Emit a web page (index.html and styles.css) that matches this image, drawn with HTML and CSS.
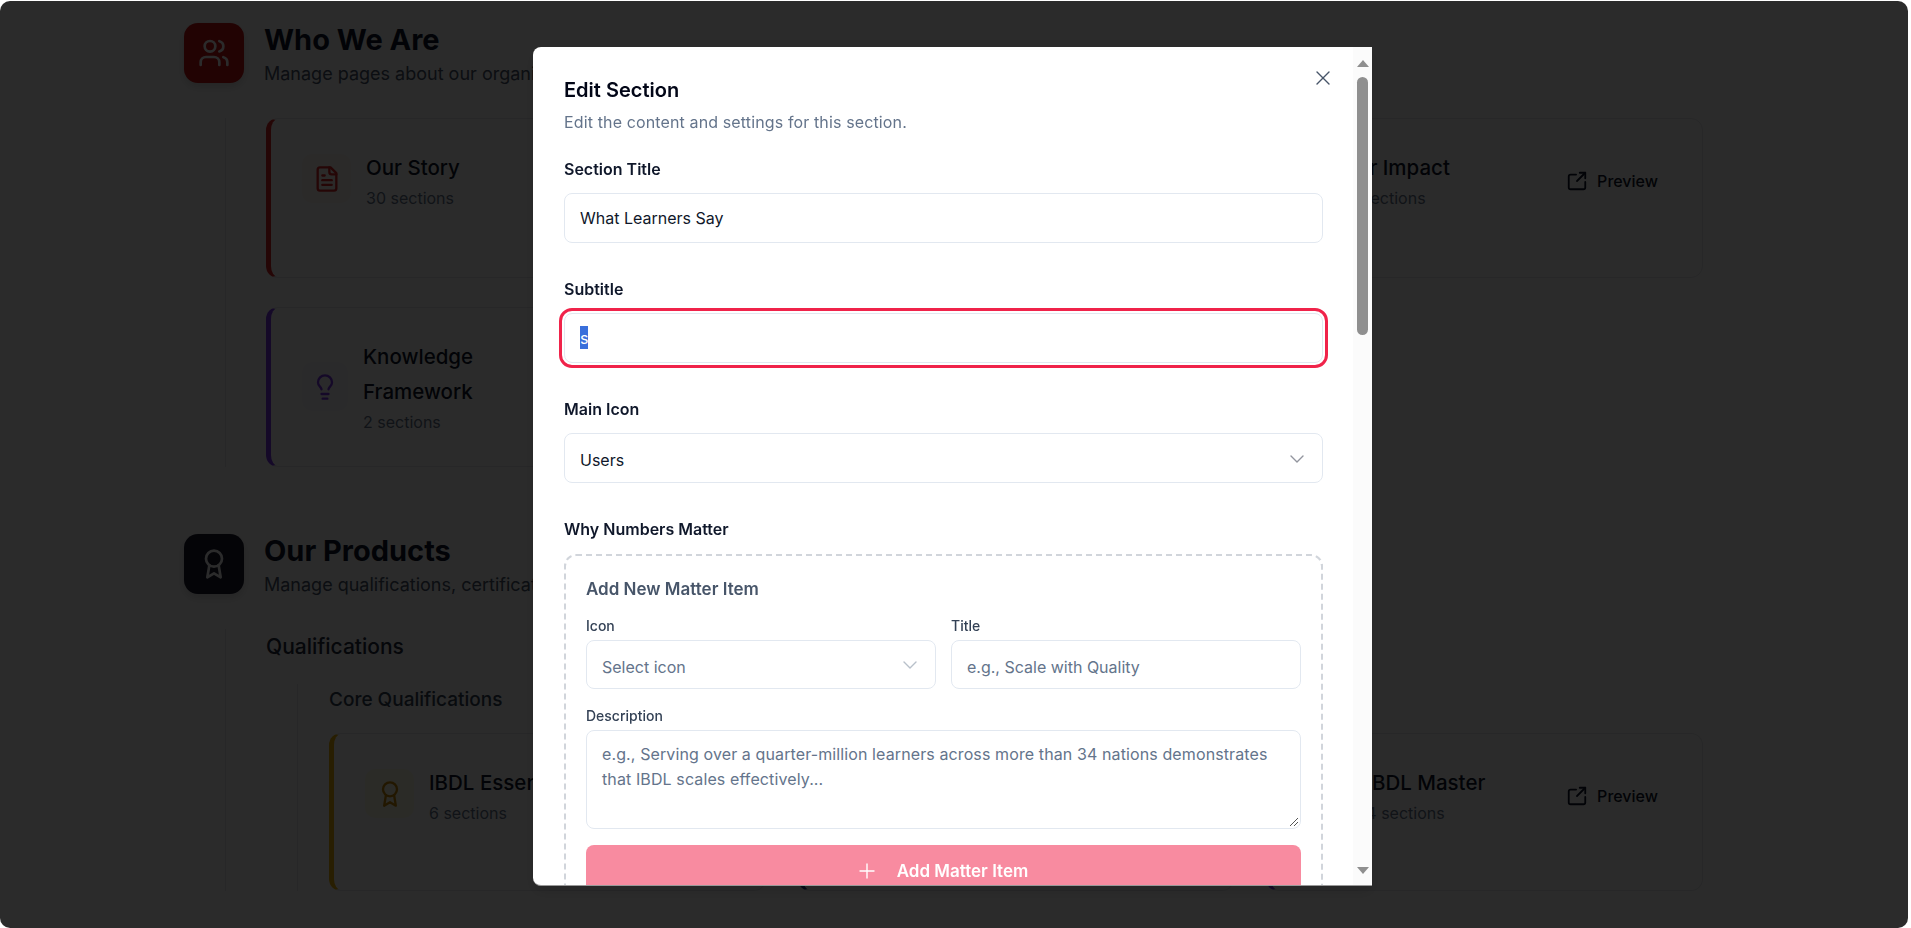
FILE: index.html
```
<!DOCTYPE html>
<html>
<head>
    <title>Edit Section</title>
    <link rel="stylesheet" href="styles.css">
</head>
<body>
    <main class="page">
        <section class="group">
            <header class="group-head">
                <div class="group-icon icon-red">
                    <svg viewBox="0 0 24 24" width="32" height="32" class="line-icon"><path d="M16 21v-2a4 4 0 0 0-4-4H6a4 4 0 0 0-4 4v2"/><circle cx="9" cy="7" r="4"/><path d="M22 21v-2a4 4 0 0 0-3-3.87"/><path d="M16 3.13a4 4 0 0 1 0 7.75"/></svg>
                </div>
                <div>
                    <h2>Who We Are</h2>
                    <p>Manage pages about our organization</p>
                </div>
            </header>
            <div class="group-body">
                <div class="card-grid">
                    <div class="card border-red">
                        <div class="card-icon tint-red">
                            <svg viewBox="0 0 24 24" width="28" height="28" class="line-icon stroke-red"><path d="M15 2H6a2 2 0 0 0-2 2v16a2 2 0 0 0 2 2h12a2 2 0 0 0 2-2V7Z"/><path d="M14 2v4a2 2 0 0 0 2 2h4"/><path d="M10 9H8"/><path d="M16 13H8"/><path d="M16 17H8"/></svg>
                        </div>
                        <div class="card-text">
                            <h3>Our Story</h3>
                            <span>30 sections</span>
                        </div>
                    </div>
                    <div class="card"></div>
                    <div class="card">
                        <div class="card-icon"></div>
                        <div class="card-text">
                            <h3>Our Impact</h3>
                            <span>12 sections</span>
                        </div>
                        <a class="preview" href="#">
                            <svg viewBox="0 0 24 24" width="22" height="22" class="line-icon"><path d="M21 13v6a2 2 0 0 1-2 2H5a2 2 0 0 1-2-2V7a2 2 0 0 1 2-2h6"/><path d="m21 3-9 9"/><path d="M15 3h6v6"/></svg>
                            Preview
                        </a>
                    </div>
                    <div class="card border-purple">
                        <div class="card-icon tint-purple">
                            <svg viewBox="0 0 24 24" width="28" height="28" class="line-icon stroke-purple"><path d="M15 14c.2-1 .7-1.7 1.5-2.5 1-.9 1.5-2.2 1.5-3.5A6 6 0 0 0 6 8c0 1 .2 2.2 1.5 3.5.7.7 1.3 1.5 1.5 2.5"/><path d="M9 18h6"/><path d="M10 22h4"/></svg>
                        </div>
                        <div class="card-text">
                            <h3>Knowledge<br>Framework</h3>
                            <span>2 sections</span>
                        </div>
                    </div>
                </div>
            </div>
        </section>

        <section class="group">
            <header class="group-head">
                <div class="group-icon icon-navy">
                    <svg viewBox="0 0 24 24" width="32" height="32" class="line-icon"><circle cx="12" cy="8" r="6"/><path d="M15.477 12.89 17 22l-5-3-5 3 1.523-9.11"/></svg>
                </div>
                <div>
                    <h2>Our Products</h2>
                    <p>Manage qualifications, certifications</p>
                </div>
            </header>
            <div class="group-body">
                <h3 class="sub-head">Qualifications</h3>
                <div class="sub-body">
                    <h4>Core Qualifications</h4>
                    <div class="card-grid">
                        <div class="card border-yellow">
                            <div class="card-icon tint-yellow">
                                <svg viewBox="0 0 24 24" width="28" height="28" class="line-icon stroke-yellow"><circle cx="12" cy="8" r="6"/><path d="M15.477 12.89 17 22l-5-3-5 3 1.523-9.11"/></svg>
                            </div>
                            <div class="card-text">
                                <h3>IBDL Essentials</h3>
                                <span>6 sections</span>
                            </div>
                        </div>
                        <div class="card border-navy"></div>
                        <div class="card border-purple">
                            <div class="card-icon"></div>
                            <div class="card-text">
                                <h3>IBDL Master</h3>
                                <span>4 sections</span>
                            </div>
                            <a class="preview" href="#">
                                <svg viewBox="0 0 24 24" width="22" height="22" class="line-icon"><path d="M21 13v6a2 2 0 0 1-2 2H5a2 2 0 0 1-2-2V7a2 2 0 0 1 2-2h6"/><path d="m21 3-9 9"/><path d="M15 3h6v6"/></svg>
                                Preview
                            </a>
                        </div>
                    </div>
                </div>
            </div>
        </section>
    </main>

    <div class="overlay"></div>

    <div class="modal">
        <div class="modal-body">
            <button class="close-btn">
                <svg viewBox="0 0 24 24" width="24" height="24" class="line-icon thin"><path d="M18 6 6 18"/><path d="m6 6 12 12"/></svg>
            </button>
            <h2 class="modal-title">Edit Section</h2>
            <p class="modal-desc">Edit the content and settings for this section.</p>

            <label class="field-label">Section Title</label>
            <div class="input">What Learners Say</div>

            <label class="field-label">Subtitle</label>
            <div class="input input-focus"><span class="selected">s</span></div>

            <label class="field-label">Main Icon</label>
            <div class="input select">
                Users
                <svg viewBox="0 0 24 24" width="24" height="24" class="line-icon thin chevron"><path d="m6 9 6 6 6-6"/></svg>
            </div>

            <label class="field-label">Why Numbers Matter</label>
            <div class="add-box">
                <h4>Add New Matter Item</h4>
                <div class="two-col">
                    <div>
                        <label class="small-label">Icon</label>
                        <div class="input input-small select placeholder">
                            Select icon
                            <svg viewBox="0 0 24 24" width="24" height="24" class="line-icon thin chevron"><path d="m6 9 6 6 6-6"/></svg>
                        </div>
                    </div>
                    <div>
                        <label class="small-label">Title</label>
                        <div class="input input-small placeholder">e.g., Scale with Quality</div>
                    </div>
                </div>
                <label class="small-label">Description</label>
                <div class="input textarea placeholder">
                    e.g., Serving over a quarter-million learners across more than 34 nations demonstrates that IBDL scales effectively...
                    <svg viewBox="0 0 10 10" width="10" height="10" class="grip"><path d="M1 9 9 1M5 9 9 5"/></svg>
                </div>
                <button class="add-btn">
                    <svg viewBox="0 0 24 24" width="24" height="24" class="line-icon thin"><path d="M5 12h14"/><path d="M12 5v14"/></svg>
                    Add Matter Item
                </button>
            </div>
        </div>
        <div class="scrollbar">
            <div class="arrow-up"></div>
            <div class="thumb-area"><div class="thumb"></div></div>
            <div class="arrow-down"></div>
        </div>
    </div>
</body>
</html>
```

FILE: styles.css
```
* {
    box-sizing: border-box;
}
html, body {
    height: 100%;
}
body {
    margin: 0;
    overflow: hidden;
    background-color: #fff;
    color: #0f172a;
    font-family: 'Inter', 'Liberation Sans', sans-serif;
    font-size: 16px;
    line-height: 28px;
}
h2, h3, h4, p {
    margin: 0;
}
.line-icon {
    fill: none;
    stroke: currentColor;
    stroke-width: 2;
    stroke-linecap: round;
    stroke-linejoin: round;
    display: block;
    flex: none;
}
.line-icon.thin {
    stroke-width: 1.4;
}

/* page behind the dialog */
.page {
    width: 1519px;
    margin-left: 184px;
    padding-top: 22px;
}
.group {
    margin-bottom: 66px;
}
.group-head {
    display: flex;
    gap: 20px;
    margin-bottom: 29px;
}
.group-icon {
    width: 60px;
    height: 60px;
    margin-top: 1px;
    border-radius: 14px;
    display: flex;
    align-items: center;
    justify-content: center;
    color: #fff;
    box-shadow: 0 4px 8px rgba(0, 0, 0, 0.15);
}
.icon-red {
    background-color: #c81414;
}
.icon-navy {
    background-color: #1a1a2e;
}
.group-head h2 {
    font-size: 29px;
    line-height: 36px;
    font-weight: 700;
}
.group-head p {
    margin-top: 1px;
    font-size: 18px;
    line-height: 30px;
    color: #475569;
}
.group-body {
    margin-left: 41px;
    padding-left: 40px;
    border-left: 1px solid #e5e7eb;
}
.card-grid {
    display: grid;
    grid-template-columns: repeat(3, 1fr);
    gap: 29px 32px;
}
.card {
    display: flex;
    align-items: flex-start;
    gap: 15px;
    min-height: 160px;
    padding: 31px 44px 28px 31px;
    background-color: #fff;
    border: 1px solid #e5e7eb;
    border-radius: 12px;
}
.border-red {
    border-left: 5px solid #dc2626;
}
.border-purple {
    border-left: 5px solid #7c3aed;
}
.border-yellow {
    border-left: 5px solid #eab308;
}
.border-navy {
    border-left: 5px solid #1e3a8a;
}
.card-icon {
    flex: none;
    width: 49px;
    height: 49px;
    margin-top: 4px;
    border-radius: 10px;
    display: flex;
    align-items: center;
    justify-content: center;
}
.tint-red {
    background-color: #fef6f2;
}
.tint-purple {
    width: 46px;
    margin-top: 23px;
    background-color: #faf8ff;
}
.tint-yellow {
    background-color: #fefce8;
}
.stroke-red {
    color: #dc2626;
}
.stroke-purple {
    color: #7c3aed;
}
.stroke-yellow {
    color: #ca8a04;
}
.card-text {
    flex: 1;
}
.card-text h3 {
    font-size: 20.5px;
    line-height: 35px;
    font-weight: 500;
}
.card-text span {
    display: block;
    margin-top: -1px;
    color: #64748b;
}
.preview {
    flex: none;
    display: flex;
    align-items: center;
    gap: 9px;
    margin-top: 17px;
    font-weight: 500;
    color: #0f172a;
    text-decoration: none;
}
.sub-head {
    font-size: 21px;
    line-height: 35px;
    font-weight: 500;
    color: #1e293b;
    margin-bottom: 20px;
}
.sub-body {
    margin-left: 31px;
    padding-left: 31px;
    border-left: 1px solid #e5e7eb;
}
.sub-body h4 {
    font-size: 19px;
    line-height: 32px;
    font-weight: 500;
    color: #334155;
    margin-bottom: 17px;
}
.sub-body .card {
    min-height: 158px;
}

/* dialog */
.overlay {
    position: fixed;
    top: 1px;
    left: 0;
    right: 3px;
    bottom: 0;
    border-radius: 10px;
    background-color: rgba(0, 0, 0, 0.83);
}
.modal {
    position: fixed;
    left: 533px;
    top: 47px;
    width: 839px;
    height: 839px;
    display: flex;
    background-color: #fff;
    border-bottom: 1px solid #999;
    border-radius: 8px 0 0 8px;
    box-shadow: 0 6px 14px rgba(0, 0, 0, 0.12);
    overflow: hidden;
}
.modal-body {
    position: relative;
    flex: 1;
    padding: 29px 30px 0 31px;
    overflow: hidden;
}
.close-btn {
    position: absolute;
    top: 19px;
    right: 18px;
    padding: 0;
    border: none;
    background: none;
    color: #475569;
}
.modal-title {
    font-size: 20px;
    line-height: 28px;
    font-weight: 600;
    color: #020617;
}
.modal-desc {
    margin: 4px 0 19px;
    color: #64748b;
    letter-spacing: 0.13px;
}
.field-label {
    display: block;
    font-weight: 600;
    margin-bottom: 10px;
}
.input {
    position: relative;
    height: 50px;
    margin-bottom: 32px;
    padding: 10px 15px;
    border: 1px solid #e2e8f0;
    border-radius: 8px;
    background-color: #fff;
}
.input-focus {
    outline: 3px solid #f0234a;
    outline-offset: 2px;
}
.selected {
    display: inline-block;
    height: 23px;
    margin-top: 2px;
    line-height: 25px;
    background-color: #3a6fdb;
    color: #fff;
}
.select {
    display: flex;
    align-items: center;
    justify-content: space-between;
    padding-top: 12px;
    padding-bottom: 8px;
}
.chevron {
    opacity: 0.45;
    margin: -3px -2px 0 0;
}
.add-box {
    height: 400px;
    margin-top: 11px;
    padding: 19px 20px;
    border: 2px dashed #d1d5db;
    border-radius: 12px;
}
.add-box h4 {
    font-size: 17px;
    line-height: 28px;
    font-weight: 600;
    color: #475569;
    margin-bottom: 11px;
}
.two-col {
    display: grid;
    grid-template-columns: 1fr 1fr;
    gap: 15px;
}
.small-label {
    display: block;
    font-size: 14px;
    line-height: 24px;
    font-weight: 500;
    color: #334155;
    margin-bottom: 2px;
}
.input-small {
    height: 49px;
    margin-bottom: 15px;
    padding-top: 12px;
}
.placeholder {
    color: #64748b;
}
.textarea {
    height: 99px;
    margin-bottom: 16px;
    padding: 11px 15px;
    line-height: 25px;
    letter-spacing: 0.11px;
}
.grip {
    position: absolute;
    right: 1px;
    bottom: 1px;
    fill: none;
    stroke: #555;
    stroke-width: 1;
}
.add-btn {
    display: flex;
    align-items: center;
    justify-content: center;
    gap: 18px;
    width: 100%;
    height: 50px;
    padding: 2px 4px 0 0;
    border: none;
    border-radius: 8px;
    background-color: #f88ba0;
    color: #fff;
    font-family: inherit;
    font-size: 17px;
    font-weight: 600;
}
.scrollbar {
    flex: none;
    width: 19px;
    display: flex;
    flex-direction: column;
    align-items: center;
    padding: 13px 0 11px;
    background-color: #fbfbfb;
}
.thumb-area {
    flex: 1;
    width: 11px;
    padding-top: 10px;
}
.thumb {
    height: 258px;
    border-radius: 6px;
    background-color: #8f8f8f;
}
.arrow-up {
    border-left: 6px solid transparent;
    border-right: 6px solid transparent;
    border-bottom: 7px solid #8f8f8f;
}
.arrow-down {
    border-left: 6px solid transparent;
    border-right: 6px solid transparent;
    border-top: 7px solid #8f8f8f;
}
```
